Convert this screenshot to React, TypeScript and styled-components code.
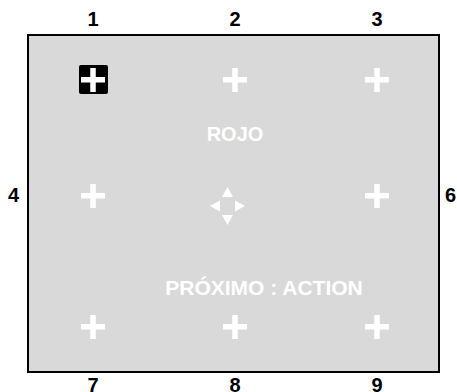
import React from 'react';
import styled, { createGlobalStyle } from "styled-components";

const GlobalStyle = createGlobalStyle`
  html, body {
    margin: 0;
    padding: 0;
    background: #ffffff;
    width: 457px;
    height: 392px;
    overflow: hidden;
  }
  body {
    font-family: "Liberation Sans", Arial, sans-serif;
  }
`;

const Screen = styled.div`
  display: grid;
  grid-template-columns: 27px 413px 17px;
  grid-template-rows: 34px 339px auto;
  width: 457px;
  height: 392px;
`;

const LabelRow = styled.div<{ $bottom?: boolean }>`
  grid-column: 2;
  grid-row: ${(p) => (p.$bottom ? 3 : 1)};
  display: grid;
  grid-template-columns: repeat(3, 128px);
  column-gap: 14px;
  padding-left: 2px;
  padding-top: ${(p) => (p.$bottom ? "1px" : "8px")};
`;

const Label = styled.div`
  font-size: 20px;
  font-weight: bold;
  line-height: 23px;
  color: #000;
  text-align: center;
`;

const SideLabel = styled(Label)<{ $right?: boolean }>`
  grid-row: 2;
  grid-column: ${(p) => (p.$right ? 3 : 1)};
  padding-top: 150px;
  text-align: ${(p) => (p.$right ? "left" : "center")};
  padding-left: ${(p) => (p.$right ? "5px" : "0")};
`;

const Board = styled.div`
  grid-row: 2;
  grid-column: 2;
  box-sizing: border-box;
  border: 2px solid #000;
  background: #d9d9d9;
  display: grid;
  grid-template-columns: repeat(3, 128px);
  grid-template-rows: 87px 23px 100px 53px 55px;
  column-gap: 14px;
`;

const Cell = styled.div`
  display: flex;
  align-items: center;
  justify-content: center;
`;

const Target = styled.div<{ $active?: boolean }>`
  width: 29px;
  height: 29px;
  display: flex;
  align-items: center;
  justify-content: center;
  background: ${(p) => (p.$active ? "#000" : "transparent")};
  border-radius: 2px;
`;

const Message = styled.div<{ $shift?: number; $size?: number }>`
  grid-column: 1 / -1;
  align-self: end;
  font-size: ${(p) => p.$size ?? 20}px;
  font-weight: bold;
  line-height: 23px;
  color: #ffffff;
  text-align: center;
  white-space: nowrap;
  padding-left: ${(p) => p.$shift ?? 0}px;
`;

const Pad = styled.div`
  margin-top: 20px;
  margin-right: 15px;
  display: flex;
`;

const Plus = () => (
  <svg width="24" height="24" viewBox="0 0 24 24">
    <rect x="0" y="9" width="24" height="5.5" fill="#fff" />
    <rect x="9.25" y="0" width="5.5" height="24" fill="#fff" />
  </svg>
);

const Arrows = () => (
  <svg width="35" height="38" viewBox="0 0 35 38">
    <polygon points="17.5,0 12,10 23,10" fill="#fff" />
    <polygon points="17.5,38 12,28 23,28" fill="#fff" />
    <polygon points="0,19 10,13.5 10,24.5" fill="#fff" />
    <polygon points="35,19 25,13.5 25,24.5" fill="#fff" />
  </svg>
);

const TargetCell: React.FC<{ active?: boolean }> = ({ active }) => (
  <Cell>
    <Target $active={active}>
      <Plus />
    </Target>
  </Cell>
);

export default function App() {
  return (
    <>
      <GlobalStyle />
      <Screen>
        <LabelRow>
          <Label>1</Label>
          <Label>2</Label>
          <Label>3</Label>
        </LabelRow>

        <SideLabel>4</SideLabel>
        <Board>
          <TargetCell active />
          <TargetCell />
          <TargetCell />

          <Message>ROJO</Message>

          <TargetCell />
          <Cell>
            <Pad>
              <Arrows />
            </Pad>
          </Cell>
          <TargetCell />

          <Message $shift={58} $size={21}>PRÓXIMO : ACTION</Message>

          <TargetCell />
          <TargetCell />
          <TargetCell />
        </Board>
        <SideLabel $right>6</SideLabel>

        <LabelRow $bottom>
          <Label>7</Label>
          <Label>8</Label>
          <Label>9</Label>
        </LabelRow>
      </Screen>
    </>
  );
}
